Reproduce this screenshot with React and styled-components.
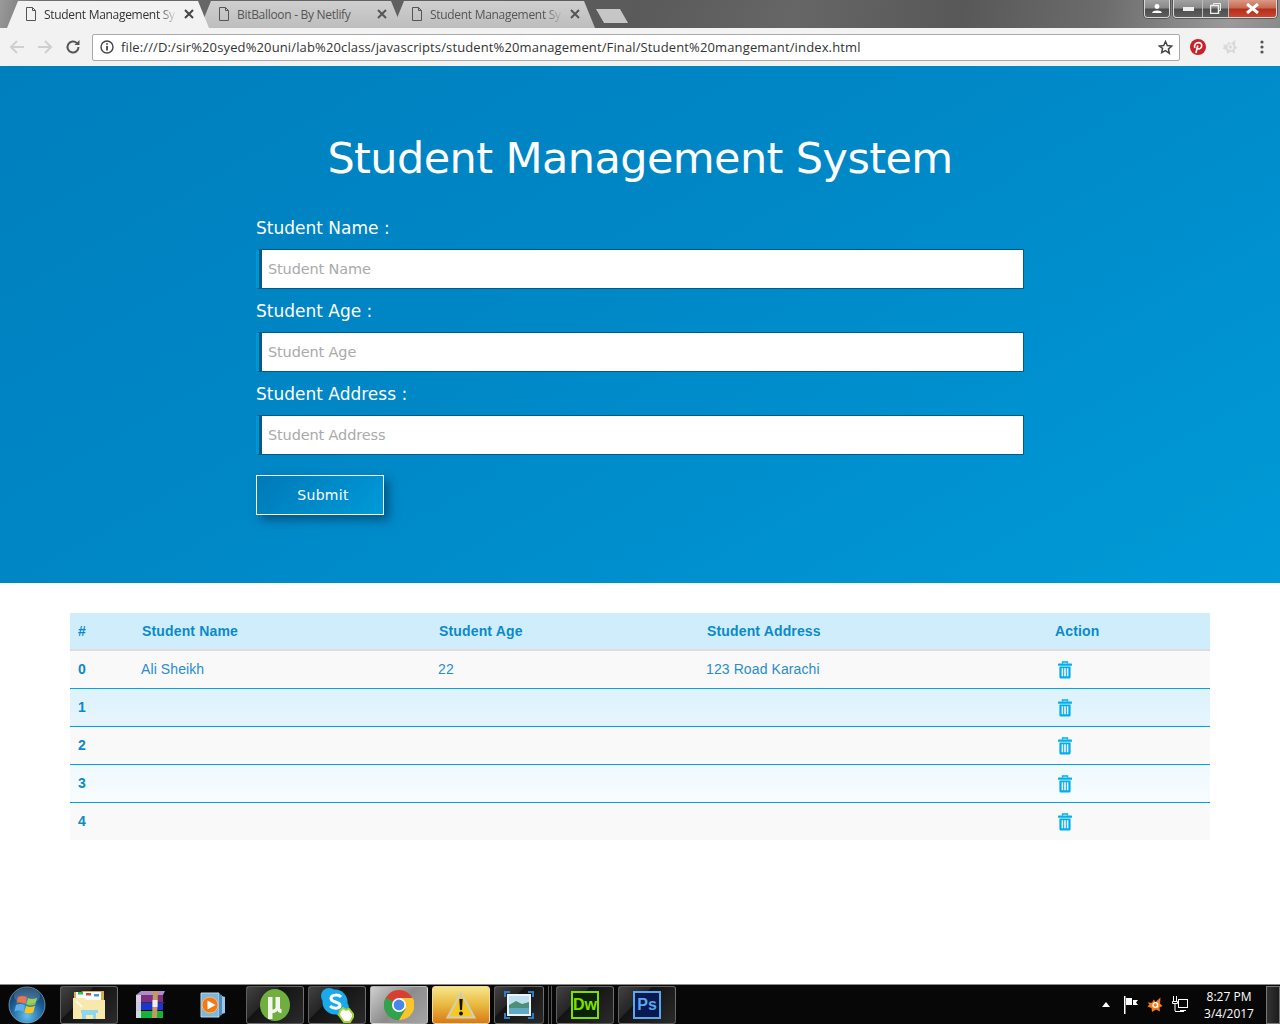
import React from "react";
import styled, { createGlobalStyle, css } from "styled-components";

const Global = createGlobalStyle`
  html, body { margin: 0; padding: 0; background: #fff; }
  * { box-sizing: border-box; }
  input::placeholder { color: #aaa; opacity: 1; }
`;

const Page = styled.div`
  width: 1280px; height: 1024px; display: flex; flex-direction: column; overflow: hidden; background: #fff;
`;

/* browser chrome */
const TitleBar = styled.div`
  height: 28px; flex: none; display: flex; justify-content: space-between; padding-left: 7px;
  background: linear-gradient(100deg, #9a9a9a 0%, #6f6f6f 3%, #666 16%, #5a5a5a 50%, #666 62%, #585858 75%, #6c6c6c 86%, #9a9a9a 96%, #8a8a8a 100%);
`;
const Tabs = styled.div`display: flex; align-items: flex-end; height: 28px;`;
const Tab = styled.div`
  position: relative; z-index: ${p => (p.$active ? 2 : 1)};
  width: 202px; height: 27px; margin-right: -9px; flex: none;
  display: flex; align-items: center; padding: 0 15px 1px 18px; gap: 7px;
  font: 12px "Open Sans", "Noto Sans", sans-serif; letter-spacing: -.3px;
  color: ${p => (p.$active ? "#333" : "#555")};
  clip-path: polygon(0 100%, 11px 0, 191px 0, 202px 100%);
  background: ${p => (p.$active ? "#f2f2f2" : "linear-gradient(#cfcfcf, #bdbdbd)")};
`;
const TabTitle = styled.span`
  flex: 1; white-space: nowrap; overflow: hidden;
  -webkit-mask-image: ${p => (p.$fade ? "linear-gradient(90deg, #000 86%, transparent 100%)" : "none")};
  mask-image: ${p => (p.$fade ? "linear-gradient(90deg, #000 86%, transparent 100%)" : "none")};
`;
const NewTab = styled.div`
  width: 32px; height: 14px; margin: 0 0 5px 10px; flex: none; background: #c6c6c6;
  clip-path: polygon(0 0, 24px 0, 32px 100%, 8px 100%);
`;
const WinControls = styled.div`display: flex; align-items: flex-start; gap: 3px; padding-right: 3px;`;
const WinGroup = styled.div`
  display: flex; height: 18px; border: 1px solid #d8d8d8; border-top: 0; border-radius: 0 0 4px 4px; overflow: hidden;
  box-shadow: 0 0 0 1px rgba(40,40,40,.5);
`;
const WinBtn = styled.div`
  width: ${p => p.$w}px; display: flex; align-items: center; justify-content: center;
  border-right: ${p => (p.$last ? "0" : "1px solid #bbb")};
  background: ${p => p.$close
    ? "linear-gradient(#d99a86 0%, #c86a50 45%, #b5301c 55%, #c8452e 100%)"
    : "linear-gradient(#a2a2a2 0%, #8a8a8a 45%, #4e4e4e 55%, #5e5e5e 100%)"};
`;
const Toolbar = styled.div`
  height: 38px; flex: none; background: #f2f2f2; display: flex; align-items: center; padding-left: 3px;
`;
const NavIcon = styled.div`width: 28px; height: 38px; flex: none; display: flex; align-items: center; justify-content: center;`;
const Omnibox = styled.div`
  width: 1088px; height: 27px; margin-left: 5px; background: #fff; border: 1px solid #a9a9a9; border-radius: 2px;
  display: flex; align-items: center; padding: 0 6px 0 7px; flex: none;
  font: 13px "Open Sans", "Noto Sans", sans-serif; color: #333; letter-spacing: .13px;
`;
const Url = styled.span`flex: 1; margin-left: 7px; white-space: nowrap;`;
const Extensions = styled.div`display: flex; align-items: center; gap: 16px; padding-left: 10px;`;
const MenuDots = styled.span`display: flex; margin-left: 6px;`;

/* hero */
const Hero = styled.section`
  height: 517px; flex: none; padding-top: 63px;
  background: linear-gradient(150deg, #007fbd 0%, #0087c6 45%, #009ad8 100%);
`;
const Form = styled.form`width: 768px; margin: 0 auto; display: flex; flex-direction: column;`;
const Title = styled.h1`
  margin: 0 0 31px; text-align: center; color: #fff; font: 400 43px/58px "DejaVu Sans", Verdana, sans-serif; letter-spacing: -.6px;
`;
const Label = styled.label`
  display: block; height: 26px; color: #fff; font: 400 17px/20px "DejaVu Sans", sans-serif; margin-bottom: 5px;
`;
const Input = styled.input`
  display: block; width: 768px; height: 40px; margin-bottom: 12px; outline: 0;
  background: #fff; border: 1px solid #035a86; border-left: 3px solid #0096d6;
  box-shadow: inset 3px 0 0 #035a86;
  font: 14.5px "DejaVu Sans", sans-serif; letter-spacing: -.14px; padding: 0 0 0 9px;
`;
const SubmitRow = styled.div`display: flex; padding-top: 8px;`;
const Submit = styled.button`
  width: 128px; height: 40px; border: 1px solid #fff; color: #fff; padding: 0 0 0 6px;
  background: linear-gradient(135deg, #0079b8, #009ad8);
  font: 14px "DejaVu Sans", sans-serif; letter-spacing: .3px;
  box-shadow: 5px 5px 9px rgba(0,50,80,.55);
`;

/* table */
const Main = styled.main`flex: 1; padding: 30px 70px 0;`;
const Table = styled.table`
  width: 1140px; border-collapse: collapse; table-layout: fixed; font: 14px "Liberation Sans", Arial, sans-serif; color: #0a8ac9;
`;
const Th = styled.th`
  height: 37px; text-align: left; padding: 0 8px; font-weight: 700; letter-spacing: .15px; color: #0a8bc9;
  background: #d0edfb; border-bottom: 2px solid #ddd;
`;
const Row = styled.tr`
  height: 38px; border-bottom: ${p => (p.$last ? "0" : "1px solid #00a3e0")};
  background: ${p => p.$bg};
`;
const Td = styled.td`
  padding: 0 8px 0 ${p => (p.$bold ? 8 : 7)}px; font-weight: ${p => (p.$bold ? 700 : 400)};
  letter-spacing: ${p => (p.$bold ? 0 : ".1px")};
  color: ${p => (p.$bold ? "#0a8ac9" : "#2a8ccb")};
`;

/* taskbar */
const Taskbar = styled.footer`
  height: 40px; flex: none; display: flex; align-items: center; background: #070707; border-top: 1px solid #8a8a8a; padding-left: 8px;
`;
const Orb = styled.div`width: 52px; flex: none; display: flex;`;
const Pinned = styled.div`display: flex; gap: 4px; align-items: center;`;
const TaskBtn = styled.div`
  width: ${p => p.$w || 58}px; height: 38px; flex: none; display: flex; align-items: center; justify-content: center;
  border-radius: 3px;
  ${p => p.$plain ? "" : css`
    border: 1px solid rgba(255,255,255,.28);
    background: linear-gradient(135deg, rgba(255,255,255,.24) 0%, rgba(255,255,255,.12) 35%, rgba(255,255,255,.05) 36%, rgba(255,255,255,.14) 100%);
  `}
  ${p => p.$light && css`background: linear-gradient(135deg, #cfcfcf, #8c8c8c 50%, #a5a5a5);`}
  ${p => p.$warn && css`background: linear-gradient(#f7e58a, #e8b93e 50%, #d9791a); border-color: #f2dc9a;`}
`;
const Grip = styled.div`width: 4px; height: 38px; margin: 0 4px; flex: none; border-left: 1px solid #555; border-right: 1px solid #555;`;
const AppTile = styled.span`
  width: 28px; height: 28px; display: flex; align-items: center; justify-content: center;
  font: 700 16px "Liberation Sans", sans-serif; border: 2px solid ${p => p.$c}; color: ${p => p.$c}; background: ${p => p.$bg};
`;
const Tray = styled.div`margin-left: auto; display: flex; align-items: center; height: 38px; `;
const TrayIcons = styled.div`display: flex; align-items: center; gap: 8px; margin-right: 15px;`;
const TrayUp = styled.span`display: flex; margin-right: 5px;`;
const Clock = styled.div`
  width: 50px; text-align: center; color: #fff; font: 12px/17px "Open Sans", "Noto Sans", sans-serif; margin-right: 12px; white-space: nowrap;
`;
const ShowDesktop = styled.div`
  width: 14px; height: 38px; border: 1px solid #777; background: linear-gradient(90deg,#333,#1c1c1c);
`;

const DocIcon = () => (
  <svg width="12" height="14" viewBox="0 0 12 14" fill="none" stroke="#555" style={{ flex: "none" }}>
    <path d="M1.500 .5h6l3 3v10h-9z M7.500 .5v3h3" />
  </svg>
);
const CloseX = ({ c = "#444" }) => (
  <svg width="10" height="10" viewBox="0 0 10 10" stroke={c} strokeWidth="2" style={{ flex: "none" }}><path d="M1 1l8 8M9 1l-8 8" /></svg>
);
const Arrow = ({ back }) => (
  <svg width="16" height="14" viewBox="0 0 16 14" fill="none" stroke="#cfcfcf" strokeWidth="2" style={{ transform: back ? "none" : "scaleX(-1)" }}>
    <path d="M15 7H2M8 1L2 7l6 6" />
  </svg>
);
const Reload = () => (
  <svg width="16" height="16" viewBox="0 0 16 16" fill="none" stroke="#555" strokeWidth="2">
    <path d="M13.500 8a5.500 5.500 0 1 1-1.600-3.900" /><path d="M14.500 1v5h-5z" fill="#555" stroke="none" />
  </svg>
);
const Info = () => (
  <svg width="14" height="14" viewBox="0 0 14 14" fill="none" stroke="#444" style={{ flex: "none" }}>
    <circle cx="7" cy="7" r="6" strokeWidth="1.400" /><path d="M7 6v4.500M7 3.200v1.600" strokeWidth="1.800" />
  </svg>
);
const Star = () => (
  <svg width="15" height="15" viewBox="0 0 24 24" fill="none" stroke="#444" strokeWidth="2.400" style={{ flex: "none" }}>
    <path d="M12 2.500l2.900 6.400 7 .8-5.200 4.700 1.400 6.900L12 17l-6.100 3.300 1.400-6.900L2.100 9.700l7-.8z" />
  </svg>
);
const Pinterest = () => (
  <svg width="16" height="16" viewBox="0 0 16 16">
    <circle cx="8" cy="8" r="8" fill="#cb2027" />
    <path d="M6 14l1.700-7.500M4.900 8.800C3.600 6 5.800 3.600 8.400 3.600c2.300 0 3.600 1.600 3.300 3.600-.3 2.200-2.600 3.500-4.200 2.100" fill="none" stroke="#fff" strokeWidth="1.600" />
  </svg>
);
const AvastMark = ({ c, inner, size = 16 }) => (
  <svg width={size} height={size} viewBox="0 0 16 16">
    <path d="M.5 5.500L5 5.800 6.800 2.500 8.500 5l5-4.500-.5 6 2.500 2.500-3 1.500.5 4-4-2-4 2.500-.5-4L.5 9.500l2-2z" fill={c} />
    <circle cx="8.300" cy="8" r="2.300" fill="none" stroke={inner} strokeWidth="1.300" />
    <path d="M10.600 6v4.400" stroke={inner} strokeWidth="1.300" />
  </svg>
);
const Dots = () => (
  <svg width="4" height="14" viewBox="0 0 4 14" fill="#555"><circle cx="2" cy="2" r="1.600" /><circle cx="2" cy="7" r="1.600" /><circle cx="2" cy="12" r="1.600" /></svg>
);
const Trash = () => (
  <svg width="14" height="18" viewBox="0 0 14 18" style={{ display: "block", margin: "2px 0 0 4px" }}>
    <path d="M4.500 2.600V1h5v1.600" fill="none" stroke="#00aeef" strokeWidth="1.400" />
    <rect x="0" y="2.600" width="14" height="2.200" rx=".6" fill="#00aeef" />
    <path d="M1.400 5.600h11.200V16a1.600 1.600 0 0 1-1.600 1.600H3A1.600 1.600 0 0 1 1.400 16z" fill="#00aeef" />
    <path d="M4.400 7.200v8M7 7.200v8M9.600 7.200v8" stroke="#fff" strokeWidth="1.500" />
  </svg>
);

const WinOrb = () => (
  <svg width="38" height="38" viewBox="0 0 38 38">
    <defs>
      <radialGradient id="orb" cx=".5" cy=".8" r=".85"><stop offset="0" stopColor="#62c0ee" /><stop offset=".55" stopColor="#1c5f97" /><stop offset="1" stopColor="#0b2c4e" /></radialGradient>
    </defs>
    <circle cx="19" cy="19" r="18" fill="url(#orb)" stroke="#8fb4cc" strokeOpacity=".7" />
    <path d="M10 11c3-1.400 6-1.200 9 .3l-1.600 6.500c-2.800-1.500-5.800-1.700-9-.3z" fill="#e85b2a" />
    <path d="M20 12c2.800 1.400 5.800 1.400 9-.2l-1.700 6.600c-3 1.500-6 1.500-9 .1z" fill="#8cc63f" />
    <path d="M8 19c3-1.400 6-1.200 9 .3l-1.600 6.500c-2.800-1.500-5.800-1.700-9-.3z" fill="#5ab0ea" />
    <path d="M18 20c2.800 1.400 5.800 1.400 9-.2l-1.700 6.600c-3 1.500-6 1.500-9 .1z" fill="#f7c51e" />
    <ellipse cx="19" cy="10" rx="13" ry="8" fill="#fff" opacity=".16" />
  </svg>
);
const Folder = () => (
  <svg width="32" height="31" viewBox="0 0 32 31">
    <path d="M1 3h7l2-1h21v27H1z" fill="#d8ad4d" />
    <path d="M3 3h25v8H3z" fill="#fff" /><rect x="5" y="3" width="5" height="2.500" fill="#2fbf4a" /><rect x="13" y="4" width="5" height="2.500" fill="#d9453b" /><rect x="21" y="5" width="5" height="2.500" fill="#3d9ae0" />
    <path d="M0 9h12l2 2h18v19H0z" fill="#f9e8ab" />
    <path d="M8 21h17v3h-2v6h-3v-4h-7v4H9v-6H8z" fill="#8ed6ee" />
    <path d="M3 12l6 6" stroke="#fff" strokeWidth="2" opacity=".7" />
  </svg>
);
const WinRar = () => (
  <svg width="32" height="28" viewBox="0 0 32 28">
    <path d="M1 4l5-4h24l-2 4z" fill="#b08cc4" />
    <path d="M1 4h27v7H1z" fill="#7d2f85" />
    <path d="M1 12l3-1h26l-2 2H1z" fill="#333" />
    <path d="M1 12h27v7H1z" fill="#1b34d4" />
    <path d="M1 20h27v7H1z" fill="#12b43a" />
    <path d="M1 4h5v23H1z" fill="#e8e8f2" opacity=".85" />
    <path d="M18 0h5l-1 27h-5z" fill="#c49a62" /><rect x="17.500" y="9" width="5" height="7" fill="#eee" />
  </svg>
);
const Media = () => (
  <svg width="26" height="28" viewBox="0 0 26 28">
    <path d="M1 2h18v24H1z" fill="#7fb6dc" stroke="#bcd9ec" /><path d="M19 3l3 1v20l-3 1z" fill="#4f8fc0" /><path d="M22 5l3 1v16l-3 1z" fill="#9cc8e4" />
    <circle cx="10" cy="14" r="8" fill="#f07a18" stroke="#f8b878" /><path d="M7.500 9.500l8 4.500-8 4.500z" fill="#fff" />
  </svg>
);
const UTorrent = () => (
  <svg width="32" height="34" viewBox="0 0 32 34">
    <ellipse cx="16" cy="17" rx="15" ry="16" fill="#6fae3f" />
    <path d="M9 9v11a5 5 0 0 0 5 5c2 0 3.500-1 4.500-2.500.3 1.500 1.500 2.500 4 2.500v-4c-1 0-1.500-.5-1.500-1.500V9h-4.500v10c0 1.500-1 2.500-2.200 2.500S13.500 20.500 13.500 19V9zM9 18v13h4.500V18z" fill="#f3f6ee" />
  </svg>
);
const Skype = () => (
  <svg width="34" height="36" viewBox="0 0 34 36">
    <circle cx="9" cy="9" r="8" fill="#1ba9ea" /><circle cx="21" cy="21" r="8" fill="#1ba9ea" />
    <circle cx="15" cy="15" r="12.500" fill="#1ba9ea" />
    <path d="M21 10c-2-2.500-10-3-10 1.500 0 4.500 9 2.500 9 7 0 3.500-7 3.500-10 .5" fill="none" stroke="#fff" strokeWidth="3" />
    <path d="M20 24l3-3 3 2 3-1 4 5v3l-3 5h-6l-5-7z" fill="#fff" stroke="#a6d431" strokeWidth="2" />
  </svg>
);
const Chrome = () => (
  <svg width="30" height="30" viewBox="0 0 30 30">
    <circle cx="15" cy="15" r="15" fill="#d93f31" />
    <path d="M15 15L2 7.500A15 15 0 0 0 15 30l6.500-11z" fill="#31a34d" />
    <path d="M15 8h13.800A15 15 0 0 1 15 30l6.500-11z" fill="#f7c62f" />
    <circle cx="15" cy="15" r="7" fill="#fff" /><circle cx="15" cy="15" r="5.400" fill="#4a85ea" />
  </svg>
);
const Warn = () => (
  <svg width="30" height="28" viewBox="0 0 30 28">
    <path d="M15 2l13.500 24.500h-27z" fill="#f5c91f" stroke="#cfcfc0" strokeWidth="2" />
    <path d="M13.300 8h3.400l-.7 11h-2z" fill="#111" /><circle cx="15" cy="22.500" r="1.900" fill="#111" />
  </svg>
);
const Photo = () => (
  <svg width="30" height="28" viewBox="0 0 30 28">
    <rect x="3" y="3" width="24" height="22" fill="#eaf3f8" />
    <rect x="5" y="5" width="20" height="9" fill="#bfe0f0" /><path d="M5 14l7-4 6 3 7-2v6H5z" fill="#4d8f79" /><rect x="5" y="17" width="20" height="6" fill="#5fa9c4" />
    <path d="M0 6V0h6v2H2v4zM24 0h6v6h-2V2h-4zM0 22v6h6v-2H2v-4zM30 22v6h-6v-2h4v-4z" fill="#2b7fc4" />
  </svg>
);
const Flag = () => (
  <svg width="16" height="18" viewBox="0 0 16 18" fill="#fff"><path d="M1 0h1.500v18H1zM3 2h6v7H3zM10 4h5l-2 2.500 2 2.500h-5z" /></svg>
);
const Net = () => (
  <svg width="18" height="18" viewBox="0 0 18 18" fill="none" stroke="#fff"><path d="M2.500 0v5M5.500 0v5M1.500 5.500h5v2h-5zM4 8v7M4 15.500h9" /><rect x="7.500" y="3.500" width="9" height="8" /><path d="M9 14.500h6" /></svg>
);

const students = [
  { id: 0, name: "Ali Sheikh", age: "22", address: "123 Road Karachi", bg: "#f9f9f9" },
  { id: 1, bg: "linear-gradient(#ddf2fc, #e5f5fd)" },
  { id: 2, bg: "#f9f9f9" },
  { id: 3, bg: "linear-gradient(#eef9fe, #f8fcff)" },
  { id: 4, bg: "#f9f9f9" },
];

export default function App() {
  return (
    <Page>
      <Global />
      <TitleBar>
        <Tabs>
          <Tab $active><DocIcon /><TabTitle $fade>Student Management Sy</TabTitle><CloseX /></Tab>
          <Tab><DocIcon /><TabTitle>BitBalloon - By Netlify</TabTitle><CloseX c="#555" /></Tab>
          <Tab><DocIcon /><TabTitle $fade>Student Management Sy</TabTitle><CloseX c="#555" /></Tab>
          <NewTab />
        </Tabs>
        <WinControls>
          <WinGroup>
            <WinBtn $w={24} $last>
              <svg width="10" height="9" viewBox="0 0 12 11" fill="#fff"><circle cx="6" cy="3" r="3" /><path d="M0 11c0-4 12-4 12 0z" /></svg>
            </WinBtn>
          </WinGroup>
          <WinGroup>
            <WinBtn $w={29}><svg width="11" height="4"><rect width="11" height="4" fill="#eee" /></svg></WinBtn>
            <WinBtn $w={26}><svg width="11" height="11" viewBox="0 0 11 11" fill="none" stroke="#eee"><path d="M3.500 2.500V.5h7v7h-2" /><rect x=".5" y="2.500" width="8" height="8" strokeWidth="1.500" /></svg></WinBtn>
            <WinBtn $w={47} $close $last><svg width="13" height="11" viewBox="0 0 13 11" stroke="#fff" strokeWidth="3"><path d="M1 1l11 9M12 1L1 10" /></svg></WinBtn>
          </WinGroup>
        </WinControls>
      </TitleBar>
      <Toolbar>
        <NavIcon><Arrow back /></NavIcon>
        <NavIcon><Arrow /></NavIcon>
        <NavIcon><Reload /></NavIcon>
        <Omnibox>
          <Info />
          <Url>file:///D:/sir%20syed%20uni/lab%20class/javascripts/student%20management/Final/Student%20mangemant/index.html</Url>
          <Star />
        </Omnibox>
        <Extensions>
          <Pinterest />
          <AvastMark c="#d9d9d9" inner="#f2f2f2" />
          <MenuDots><Dots /></MenuDots>
        </Extensions>
      </Toolbar>
      <Hero>
        <Form onSubmit={e => e.preventDefault()}>
          <Title>Student Management System</Title>
          <Label>Student Name :</Label>
          <Input placeholder="Student Name" />
          <Label>Student Age :</Label>
          <Input placeholder="Student Age" />
          <Label>Student Address :</Label>
          <Input placeholder="Student Address" />
          <SubmitRow><Submit type="submit">Submit</Submit></SubmitRow>
        </Form>
      </Hero>
      <Main>
        <Table>
          <colgroup>
            <col style={{ width: 64 }} /><col style={{ width: 297 }} /><col style={{ width: 268 }} /><col style={{ width: 348 }} /><col />
          </colgroup>
          <thead>
            <tr>
              <Th>#</Th><Th>Student Name</Th><Th>Student Age</Th><Th>Student Address</Th><Th>Action</Th>
            </tr>
          </thead>
          <tbody>
            {students.map((s, i) => (
              <Row key={s.id} $bg={s.bg} $last={i === students.length - 1}>
                <Td $bold>{s.id}</Td><Td>{s.name}</Td><Td>{s.age}</Td><Td>{s.address}</Td><Td><Trash /></Td>
              </Row>
            ))}
          </tbody>
        </Table>
      </Main>
      <Taskbar>
        <Orb><WinOrb /></Orb>
        <Pinned>
          <TaskBtn><Folder /></TaskBtn>
          <TaskBtn $plain><WinRar /></TaskBtn>
          <TaskBtn $plain><Media /></TaskBtn>
          <TaskBtn><UTorrent /></TaskBtn>
          <TaskBtn><Skype /></TaskBtn>
          <TaskBtn $light><Chrome /></TaskBtn>
          <TaskBtn $warn><Warn /></TaskBtn>
          <TaskBtn $w={50}><Photo /></TaskBtn>
        </Pinned>
        <Grip />
        <Pinned>
          <TaskBtn><AppTile $c="#7fe000" $bg="#0d2200">Dw</AppTile></TaskBtn>
          <TaskBtn><AppTile $c="#5aa7ee" $bg="#0a1a50">Ps</AppTile></TaskBtn>
        </Pinned>
        <Tray>
          <TrayIcons>
            <TrayUp><svg width="8" height="5" viewBox="0 0 8 5" fill="#fff"><path d="M4 0l4 5H0z" /></svg></TrayUp>
            <Flag />
            <AvastMark c="#f57c14" inner="#fff" />
            <Net />
          </TrayIcons>
          <Clock>8:27 PM<br />3/4/2017</Clock>
          <ShowDesktop />
        </Tray>
      </Taskbar>
    </Page>
  );
}
